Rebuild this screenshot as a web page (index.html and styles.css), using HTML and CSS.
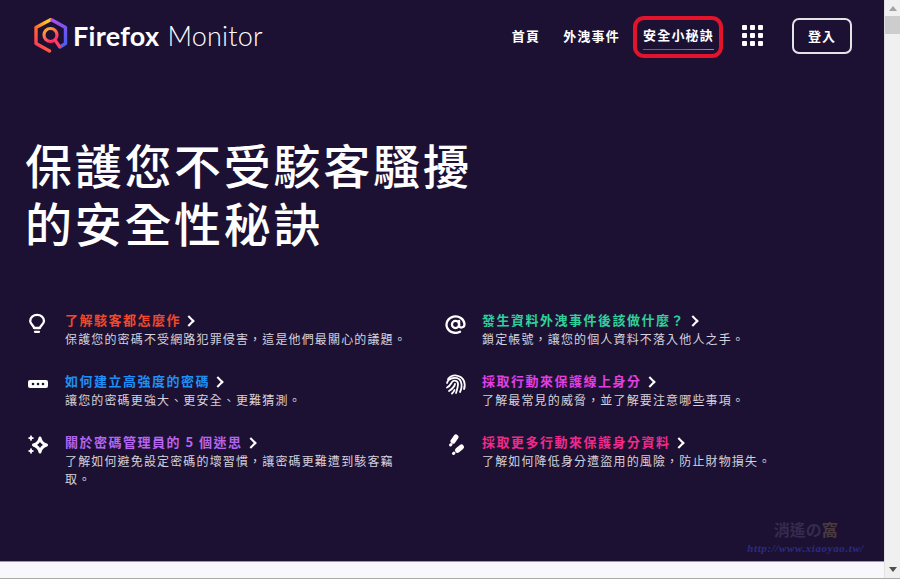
FILE: index.html
```html
<!DOCTYPE html>
<html>

<head>
    <meta charset="utf-8">
    <title>Firefox Monitor</title>
    <link rel="stylesheet" href="styles.css">
</head>

<body>
    <div class="window">
        <div class="page">
            <header class="header">
                <a class="logo">
                    <svg class="logo-mark" width="34" height="36" viewBox="0 0 34 36" fill="none" stroke-linecap="round" stroke-linejoin="round">
                        <defs>
                            <linearGradient id="ring-warm" x1="0" y1="1" x2="0.6" y2="0">
                                <stop offset="0" stop-color="#ff2a6a"/>
                                <stop offset="0.55" stop-color="#ff6a2a"/>
                                <stop offset="1" stop-color="#ffc02e"/>
                            </linearGradient>
                            <linearGradient id="ring-cool" x1="0" y1="0" x2="0.4" y2="1">
                                <stop offset="0" stop-color="#b04cf0"/>
                                <stop offset="1" stop-color="#4f5cf0"/>
                            </linearGradient>
                            <linearGradient id="lens" x1="0" y1="0" x2="0.6" y2="1">
                                <stop offset="0" stop-color="#ffb52e"/>
                                <stop offset="1" stop-color="#ff2a6a"/>
                            </linearGradient>
                        </defs>
                        <path d="M15.500 33 L2 25.500 V9.500 L16.500 1.800" stroke="url(#ring-warm)" stroke-width="3.400"/>
                        <path d="M18 2 L31.500 9.500 V25.500 L26 29" stroke="url(#ring-cool)" stroke-width="3.400"/>
                        <circle cx="16.500" cy="17" r="6.500" stroke="url(#lens)" stroke-width="3.200"/>
                        <path d="M21 22 L25.500 28.500" stroke="#ff3d5e" stroke-width="3.200"/>
                    </svg>
                    <span class="logo-name">Firefox</span>
                    <span class="logo-product">Monitor</span>
                </a>
                <nav class="nav">
                    <a class="nav-link">首頁</a>
                    <a class="nav-link">外洩事件</a>
                    <a class="nav-link nav-current"><span class="nav-label">安全小秘訣</span></a>
                    <svg class="apps" width="21" height="21" viewBox="0 0 21 21" fill="#fff">
                        <rect x="0" y="0" width="5" height="5" rx="1"/>
                        <rect x="8" y="0" width="5" height="5" rx="1"/>
                        <rect x="16" y="0" width="5" height="5" rx="1"/>
                        <rect x="0" y="8" width="5" height="5" rx="1"/>
                        <rect x="8" y="8" width="5" height="5" rx="1"/>
                        <rect x="16" y="8" width="5" height="5" rx="1"/>
                        <rect x="0" y="16" width="5" height="5" rx="1"/>
                        <rect x="8" y="16" width="5" height="5" rx="1"/>
                        <rect x="16" y="16" width="5" height="5" rx="1"/>
                    </svg>
                    <a class="signin">登入</a>
                </nav>
            </header>

            <h1 class="headline">保護您不受駭客騷擾<br>的安全性秘訣</h1>

            <div class="tips">
                <div class="tip">
                    <svg class="tip-icon" viewBox="0 0 22 22" fill="none" stroke="#fff" stroke-width="2.300" stroke-linecap="round" stroke-linejoin="round">
                        <path d="M7 16 C7 13.500 3.200 12.500 3.200 9 A6.900 6.100 0 0 1 17 9 C17 12.500 13 13.500 13 16 Z"/>
                        <path d="M8 19.800 H12"/>
                    </svg>
                    <div>
                        <a class="tip-title red">了解駭客都怎麼作<span class="chevron"></span></a>
                        <p class="tip-text">保護您的密碼不受網路犯罪侵害&#65292;這是他們最關心的議題。</p>
                    </div>
                </div>
                <div class="tip tip-right">
                    <svg class="tip-icon" viewBox="0 0 22 22" fill="none" stroke="#fff" stroke-width="2.300" stroke-linecap="round">
                        <circle cx="10.500" cy="12.500" r="3.600"/>
                        <path d="M14.100 9 V13.500 C14.100 16.500 19.500 16.300 19.500 12 A9 8.200 0 1 0 15 19.800"/>
                    </svg>
                    <div>
                        <a class="tip-title green">發生資料外洩事件後該做什麼&#65311;<span class="chevron"></span></a>
                        <p class="tip-text">鎖定帳號&#65292;讓您的個人資料不落入他人之手。</p>
                    </div>
                </div>
                <div class="tip">
                    <svg class="tip-icon" viewBox="0 0 22 22">
                        <rect x="1" y="7" width="20" height="8" rx="2" fill="#fff"/>
                        <circle cx="6" cy="11" r="1.300" fill="#1d1133"/>
                        <circle cx="11" cy="11" r="1.300" fill="#1d1133"/>
                        <circle cx="16" cy="11" r="1.300" fill="#1d1133"/>
                    </svg>
                    <div>
                        <a class="tip-title blue">如何建立高強度的密碼<span class="chevron"></span></a>
                        <p class="tip-text">讓您的密碼更強大、更安全、更難猜測。</p>
                    </div>
                </div>
                <div class="tip tip-right">
                    <svg class="tip-icon" viewBox="0 0 22 22" fill="none" stroke="#fff" stroke-width="1.800" stroke-linecap="round">
                        <path d="M3 6 A9.500 9.500 0 0 1 19 8 C20 11 20 14 19 16"/>
                        <path d="M2 10 C3.500 4 14 3 16 9 C17 12 16.500 16 15 19"/>
                        <path d="M2 14.500 C5 13 6 10.500 7 9 C9 6.500 13 8 13 11 C13 14 12 17 11 20"/>
                        <path d="M4 18 C7 16 9.500 14 10 11"/>
                        <path d="M7 20.500 C8 19.500 9 18.500 9.500 17"/>
                    </svg>
                    <div>
                        <a class="tip-title magenta">採取行動來保護線上身分<span class="chevron"></span></a>
                        <p class="tip-text">了解最常見的威脅&#65292;並了解要注意哪些事項。</p>
                    </div>
                </div>
                <div class="tip">
                    <svg class="tip-icon" viewBox="0 0 22 22" fill="#fff">
                        <path d="M13 4 C13.800 8 15.500 9.800 19.500 11 C15.500 12.200 13.800 14 13 18 C12.200 14 10.500 12.200 6.500 11 C10.500 9.800 12.200 8 13 4 Z" fill="none" stroke="#fff" stroke-width="3" stroke-linejoin="round"/>
                        <rect x="1.500" y="3.200" width="5" height="1.800"/>
                        <rect x="3.100" y="1.600" width="1.800" height="5"/>
                        <rect x="1.500" y="16.100" width="5" height="1.800"/>
                        <rect x="3.100" y="14.500" width="1.800" height="5"/>
                    </svg>
                    <div>
                        <a class="tip-title violet">關於密碼管理員的 5 個迷思<span class="chevron"></span></a>
                        <p class="tip-text">了解如何避免設定密碼的壞習慣&#65292;讓密碼更難遭到駭客竊取。</p>
                    </div>
                </div>
                <div class="tip tip-right">
                    <svg class="tip-icon" viewBox="0 0 22 22" fill="none" stroke="#fff" stroke-linecap="round">
                        <path d="M11 3 L8 7.200" stroke-width="5"/>
                        <path d="M6 10.500 L5.500 11" stroke-width="3"/>
                        <path d="M16.500 13 L12.500 16.300" stroke-width="5"/>
                        <path d="M9 19 L8.500 19.500" stroke-width="3"/>
                    </svg>
                    <div>
                        <a class="tip-title pink">採取更多行動來保護身分資料<span class="chevron"></span></a>
                        <p class="tip-text">了解如何降低身分遭盜用的風險&#65292;防止財物損失。</p>
                    </div>
                </div>
            </div>

            <div class="watermark">
                <div class="watermark-name">消遙の<span class="watermark-end">窩</span></div>
                <div class="watermark-url">http://www.xiaoyao.tw/</div>
            </div>
        </div>

        <div class="scrollbar">
            <span class="arrow-up"></span>
            <span class="thumb"></span>
            <span class="arrow-down"></span>
        </div>
    </div>
</body>

</html>
```

FILE: styles.css
```css
* {
    box-sizing: border-box;
}

html,
body {
    margin: 0;
    height: 100%;
    overflow: hidden;
}

body {
    background-color: #f8f7fc;
    font-family: "Noto Sans CJK TC", "Noto Sans", sans-serif;
    border-bottom: 1px solid #a9a9a9;
}

.window {
    display: flex;
    height: 578px;
}

.page {
    position: relative;
    flex: 1;
    height: 562px;
    background-color: #1d1133;
    color: #fff;
    border-bottom: 1px solid #9a97a8;
}

.header {
    display: flex;
    justify-content: space-between;
    align-items: center;
    height: 71px;
    padding: 0 32px 0 34px;
}

.logo {
    display: flex;
    align-items: center;
    font-family: Lato, sans-serif;
    font-size: 27px;
}

.logo-mark {
    margin-right: 5px;
}

.logo-name {
    font-weight: 700;
    letter-spacing: 0.3px;
    margin-right: 8px;
}

.logo-product {
    font-weight: 300;
    letter-spacing: 0.2px;
}

.nav {
    display: flex;
    align-items: center;
}

.nav-link {
    font-size: 13px;
    font-weight: 700;
    letter-spacing: 1.2px;
    margin-right: 23px;
}

.nav-current {
    margin: 2px 19px 0 -10px;
    padding: 5px 5px 4px 6px;
    border: 4px solid #e2132b;
    border-radius: 11px;
}

.nav-label {
    display: block;
    padding-bottom: 5px;
    border-bottom: 1px solid;
    border-image: linear-gradient(90deg, #5a52f0, #d02ca0, #ff7a2a) 1;
}

.apps {
    margin-right: 29px;
}

.signin {
    display: block;
    width: 60px;
    height: 36px;
    line-height: 32px;
    text-align: center;
    font-size: 13px;
    font-weight: 700;
    letter-spacing: 1px;
    border: 2px solid #e4e4e8;
    border-radius: 7px;
}

.headline {
    margin: 64px 0 0 25px;
    font-size: 47px;
    font-weight: 500;
    line-height: 58px;
    letter-spacing: 2.7px;
}

.tips {
    display: grid;
    grid-template-columns: 418px 400px;
    grid-auto-rows: 61px;
    margin: 59px 0 0 27px;
}

.tip {
    display: flex;
    align-items: flex-start;
}

.tip-right .tip-icon {
    margin-right: 15px;
}

.tip-icon {
    flex: none;
    width: 22px;
    height: 22px;
    margin: 2px 16px 0 0;
}

.tip-title {
    display: block;
    font-size: 13px;
    font-weight: 700;
    line-height: 20px;
    letter-spacing: 1.5px;
}

.chevron {
    display: inline-block;
    width: 8px;
    height: 8px;
    margin-left: 4px;
    border-top: 2px solid #fff;
    border-right: 2px solid #fff;
    transform: rotate(45deg);
}

.tip-text {
    margin: 0;
    max-width: 346px;
    font-size: 12px;
    line-height: 18px;
    letter-spacing: 1.15px;
    color: #d4d2dc;
}

.red {
    color: #f0492c;
}

.green {
    color: #2fd19b;
}

.blue {
    color: #1e90f5;
}

.magenta {
    color: #e23fe0;
}

.violet {
    color: #b565f0;
}

.pink {
    color: #f02a8c;
}

.watermark {
    position: absolute;
    right: 20px;
    bottom: 6px;
    text-align: center;
    font-weight: 700;
}

.watermark-name {
    font-size: 16px;
    line-height: 24px;
    color: #352b4e;
}

.watermark-end {
    color: #493a40;
}

.watermark-url {
    font-family: "Liberation Serif", serif;
    font-size: 11px;
    line-height: 14px;
    font-style: italic;
    letter-spacing: 0.6px;
    color: #2a2c84;
}

.scrollbar {
    display: flex;
    flex-direction: column;
    align-items: center;
    width: 16px;
    height: 578px;
    background-color: #f0f0f0;
    border-left: 1px solid #e2e2e2;
}

.arrow-up,
.arrow-down {
    flex: none;
    width: 0;
    height: 0;
    border-left: 4px solid transparent;
    border-right: 4px solid transparent;
}

.arrow-up {
    margin-top: 6px;
    border-bottom: 5px solid #a3a3a3;
}

.thumb {
    width: 15px;
    height: 18px;
    margin-top: 5px;
    background-color: #cdcdcd;
}

.arrow-down {
    margin-top: auto;
    margin-bottom: 6px;
    border-top: 5px solid #505050;
}
```
